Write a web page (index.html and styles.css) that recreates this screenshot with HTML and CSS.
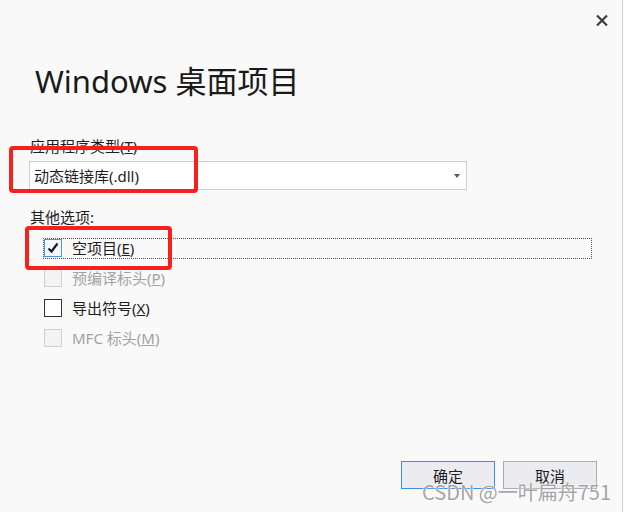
FILE: index.html
```html
<!DOCTYPE html>
<html lang="zh-CN">
<head>
<meta charset="utf-8">
<title>Windows 桌面项目</title>
<link rel="stylesheet" href="styles.css">
</head>
<body>
<div class="dialog">
  <div class="titlebar">
    <button class="close" aria-label="关闭">
      <svg width="12" height="11" viewBox="0 0 12 11"><path d="M1 0.5 L11 10.5 M11 0.5 L1 10.5" stroke="#3f3f3f" stroke-width="2.2" fill="none"/></svg>
    </button>
  </div>
  <h1 class="title">Windows 桌面项目</h1>
  <div class="form">
    <div class="field-label">应用程序类型(<u>T</u>)</div>
    <div class="select">
      <span class="select-value">动态链接库(.dll)</span>
      <span class="select-arrow"></span>
    </div>
    <div class="field-label other">其他选项:</div>
    <ul class="options">
      <li class="opt">
        <div class="item focused">
          <span class="box checked"><svg width="14" height="14" viewBox="0 0 14 14"><path d="M2.5 7.5 L5.5 10.5 L11.5 2.5" stroke="#1a1a1a" stroke-width="2.2" fill="none"/></svg></span>
          <span class="opt-text">空项目(<u>E</u>)</span>
        </div>
      </li>
      <li class="opt disabled">
        <div class="item">
          <span class="box"></span>
          <span class="opt-text">预编译标头(<u>P</u>)</span>
        </div>
      </li>
      <li class="opt">
        <div class="item">
          <span class="box"></span>
          <span class="opt-text">导出符号(<u>X</u>)</span>
        </div>
      </li>
      <li class="opt disabled">
        <div class="item">
          <span class="box"></span>
          <span class="opt-text">MFC 标头(<u>M</u>)</span>
        </div>
      </li>
    </ul>
  </div>
  <div class="buttons">
    <button class="btn primary">确定</button>
    <button class="btn">取消</button>
  </div>
  <div class="mark mark-type"></div>
  <div class="mark mark-empty"></div>
  <div class="watermark">CSDN @一叶扁舟751</div>
</div>
</body>
</html>
```
FILE: styles.css
```css
html, body {
  margin: 0;
  padding: 0;
  background: #ffffff;
}
body {
  font-family: "Noto Sans", "Noto Sans CJK SC", sans-serif;
  color: #1e1e1e;
}
.dialog {
  position: relative;
  width: 623px;
  height: 512px;
  box-sizing: border-box;
  border-right: 1px solid #cfcfe0;
  background: #f9f9f9;
  display: flex;
  flex-direction: column;
  overflow: hidden;
}
.titlebar {
  height: 40px;
  box-sizing: border-box;
  display: flex;
  justify-content: flex-end;
  padding: 15px 14px 0 0;
}
.close {
  border: 0;
  background: transparent;
  padding: 0;
  width: 12px;
  height: 11px;
  display: block;
}
.close svg { display: block; }
.title {
  margin: 19px 0 0 0;
  padding-left: 35px;
  font-size: 31px;
  font-weight: 400;
  line-height: 44px;
  color: #1a1a1a;
}
.form {
  padding-left: 29px;
  margin-top: 33px;
}
.field-label {
  font-size: 15px;
  line-height: 20px;
  padding-left: 1px;
  color: #1e1e1e;
}
.select {
  margin-top: 5px;
  width: 438px;
  height: 29px;
  box-sizing: border-box;
  border: 1px solid #cdcddc;
  background: #ffffff;
  display: flex;
  align-items: center;
  justify-content: space-between;
  padding: 0 6px 0 4px;
}
.select-value {
  font-size: 15px;
  line-height: 20px;
}
.select-arrow {
  width: 0;
  height: 0;
  border-left: 3.5px solid transparent;
  border-right: 3.5px solid transparent;
  border-top: 4px solid #5a5a5a;
}
.field-label.other {
  margin-top: 17px;
}
.options {
  list-style: none;
  margin: 6px 0 0 0;
  padding: 0 0 0 15px;
}
.opt {
  height: 30px;
  display: flex;
  align-items: center;
}
.item {
  display: flex;
  align-items: center;
  height: 19px;
}
.item.focused {
  width: 547px;
  outline: 1px dotted #555555;
  outline-offset: 0;
}
.box {
  width: 18px;
  height: 18px;
  box-sizing: border-box;
  border: 1px solid #333333;
  background: #ffffff;
  margin-right: 10px;
  display: flex;
  align-items: center;
  justify-content: center;
  flex: none;
}
.box.checked {
  border-color: #4f95e0;
  background: #f4f8fe;
}
.opt-text {
  font-size: 15px;
  line-height: 20px;
  color: #1e1e1e;
}
.opt.disabled .box {
  border-color: #cfcfcf;
  background: #f3f3f3;
}
.opt.disabled .opt-text {
  color: #a2a2a2;
}
.buttons {
  margin-top: auto;
  display: flex;
  justify-content: flex-end;
  gap: 8px;
  padding: 0 25px 23px 0;
}
.btn {
  width: 94px;
  height: 28px;
  box-sizing: border-box;
  border: 1px solid #adadad;
  background: #ececf0;
  font-family: "Noto Sans CJK SC", sans-serif;
  font-size: 15px;
  color: #1e1e1e;
  padding: 0;
}
.btn.primary {
  border-color: #3c8fe8;
}
.mark {
  position: absolute;
  box-sizing: border-box;
  border: 4px solid #f7201c;
  border-radius: 4px;
}
.mark-type {
  left: 9px;
  top: 146px;
  width: 189px;
  height: 47px;
}
.mark-empty {
  left: 25px;
  top: 226px;
  width: 147px;
  height: 44px;
}
.watermark {
  position: absolute;
  left: 422px;
  top: 479px;
  font-family: "Noto Sans CJK SC", sans-serif;
  font-size: 20px;
  line-height: 26px;
  color: rgba(140, 140, 140, 0.8);
  text-shadow: 0 0 1px #ffffff, 0 0 2px #ffffff;
  white-space: nowrap;
}
```
